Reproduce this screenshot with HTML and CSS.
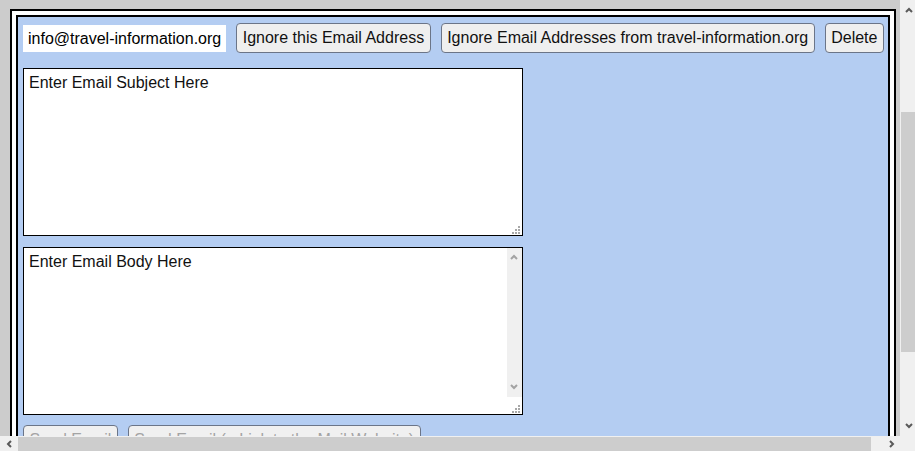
FILE: index.html
```html
<!DOCTYPE html>
<html lang="en">
<head>
    <meta charset="UTF-8">
    <title>Email Review</title>
    <link rel="stylesheet" href="styles.css">
</head>
<body>

<div class="window">
    <div class="viewport">
        <div class="page">
            <div class="entry">
                <div class="panel">
                    <!-- ADDRESS + ACTIONS -->
                    <div class="top-row">
                        <span class="address">info@travel-information.org</span>
                        <button>Ignore this Email Address</button>
                        <button>Ignore Email Addresses from travel-information.org</button>
                        <button>Delete</button>
                    </div>

                    <!-- MESSAGE -->
                    <div class="field subject-field">
                        <textarea class="subject">Enter Email Subject Here</textarea>
                        <span class="grip"></span>
                    </div>
                    <div class="field">
                        <textarea class="body-text">Enter Email Body Here</textarea>
                        <div class="ta-scroll">
                            <svg class="ta-arrow ta-up" width="8" height="6" viewBox="0 0 8 6"><polyline points="1,5 4,2 7,5" fill="none" stroke="#a3a3a3" stroke-width="2"/></svg>
                            <svg class="ta-arrow ta-down" width="8" height="6" viewBox="0 0 8 6"><polyline points="1,1 4,4 7,1" fill="none" stroke="#a3a3a3" stroke-width="2"/></svg>
                        </div>
                        <span class="grip"></span>
                    </div>

                    <!-- SEND -->
                    <div class="send-row">
                        <button disabled>Send Email</button>
                        <button disabled>Send Email (a Link to the Mail Website)</button>
                    </div>
                </div>
            </div>
        </div>
    </div>

    <!-- WINDOW SCROLLBARS -->
    <div class="vscroll">
        <svg class="arrow" style="left: 5px; top: 7px;" width="8" height="6" viewBox="0 0 8 6"><polyline points="1,5 4,2 7,5" fill="none" stroke="#5a5a5a" stroke-width="2"/></svg>
        <div class="thumb" style="top: 112px; height: 240px;"></div>
        <svg class="arrow" style="left: 5px; top: 423px;" width="8" height="6" viewBox="0 0 8 6"><polyline points="1,1 4,4 7,1" fill="none" stroke="#5a5a5a" stroke-width="2"/></svg>
    </div>
    <div class="hscroll">
        <svg class="arrow" style="left: 6px; top: 4px;" width="6" height="8" viewBox="0 0 6 8"><polyline points="5,1 2,4 5,7" fill="none" stroke="#5a5a5a" stroke-width="2"/></svg>
        <div class="thumb" style="left: 18px; width: 853px;"></div>
        <svg class="arrow" style="left: 889px; top: 4px;" width="6" height="8" viewBox="0 0 6 8"><polyline points="1,1 4,4 1,7" fill="none" stroke="#5a5a5a" stroke-width="2"/></svg>
    </div>
    <div class="corner"></div>
</div>

</body>
</html>
```

FILE: styles.css
```css
body {
    margin: 0;
    font-family: "Liberation Sans", Arial, sans-serif;
    overflow: hidden;
}

.window {
    position: relative;
    width: 915px;
    height: 451px;
    overflow: hidden;
    background-color: #cccccc;
}

.viewport {
    width: 900px;
    height: 436px;
    overflow: hidden;
}

.page {
    width: 886px;
    padding: 9px 10px;
}

.entry {
    border: 2px solid black;
    background-color: white;
    padding: 4px;
}

.panel {
    border: 2px solid black;
    background-color: #b4cdf2;
    padding: 6px 5px;
}

.top-row {
    display: flex;
    align-items: center;
    gap: 10px;
    height: 30px;
    margin-bottom: 15px;
    white-space: nowrap;
}

.address {
    background-color: white;
    padding: 4px 5px;
    font-size: 16px;
    line-height: 19px;
}

button {
    font-family: "Liberation Sans", Arial, sans-serif;
    font-size: 16px;
    line-height: 18px;
    padding: 5px 5.5px;
    border: 1px solid #6b7588;
    border-radius: 4px;
    background-color: #efefef;
    color: #111;
    white-space: nowrap;
}

button:disabled {
    color: #a4a4a4;
    background-color: #f0f0f0;
}

/* textareas */
.field {
    position: relative;
    width: 500px;
}

.subject-field {
    margin-bottom: 11px;
}

textarea {
    display: block;
    box-sizing: border-box;
    width: 500px;
    height: 168px;
    margin: 0;
    padding: 5px;
    border: 1px solid black;
    font-family: "Liberation Sans", Arial, sans-serif;
    font-size: 16px;
    color: #111;
    background-color: white;
    resize: none;
    overflow: hidden;
}

.grip {
    position: absolute;
    right: 3px;
    bottom: 2px;
    width: 8px;
    height: 8px;
    background:
        linear-gradient(#a8a8a8, #a8a8a8) 6px 0 / 2px 2px no-repeat,
        linear-gradient(#a8a8a8, #a8a8a8) 3px 3px / 2px 2px no-repeat,
        linear-gradient(#a8a8a8, #a8a8a8) 6px 3px / 2px 2px no-repeat,
        linear-gradient(#a8a8a8, #a8a8a8) 0 6px / 2px 2px no-repeat,
        linear-gradient(#a8a8a8, #a8a8a8) 3px 6px / 2px 2px no-repeat,
        linear-gradient(#a8a8a8, #a8a8a8) 6px 6px / 2px 2px no-repeat;
}

.ta-scroll {
    position: absolute;
    top: 1px;
    right: 1px;
    width: 15px;
    height: 149px;
    background-color: #f0f0f0;
}

.ta-arrow {
    position: absolute;
    left: 3px;
}

.ta-up {
    top: 6px;
}

.ta-down {
    top: 136px;
}

.send-row {
    display: flex;
    gap: 10px;
    margin-top: 10px;
}

/* window scrollbars */
.vscroll {
    position: absolute;
    top: 0;
    right: 0;
    width: 15px;
    height: 436px;
    background-color: #f0f0f0;
}

.vscroll .thumb {
    position: absolute;
    left: 1px;
    right: 0;
    background-color: #cdcdcd;
}

.hscroll {
    position: absolute;
    left: 0;
    bottom: 0;
    width: 900px;
    height: 15px;
    background-color: #f0f0f0;
}

.hscroll .thumb {
    position: absolute;
    top: 1px;
    bottom: 0;
    background-color: #cdcdcd;
}

.arrow {
    position: absolute;
}

.corner {
    position: absolute;
    right: 0;
    bottom: 0;
    width: 15px;
    height: 15px;
    background-color: #f0f0f0;
}
```
